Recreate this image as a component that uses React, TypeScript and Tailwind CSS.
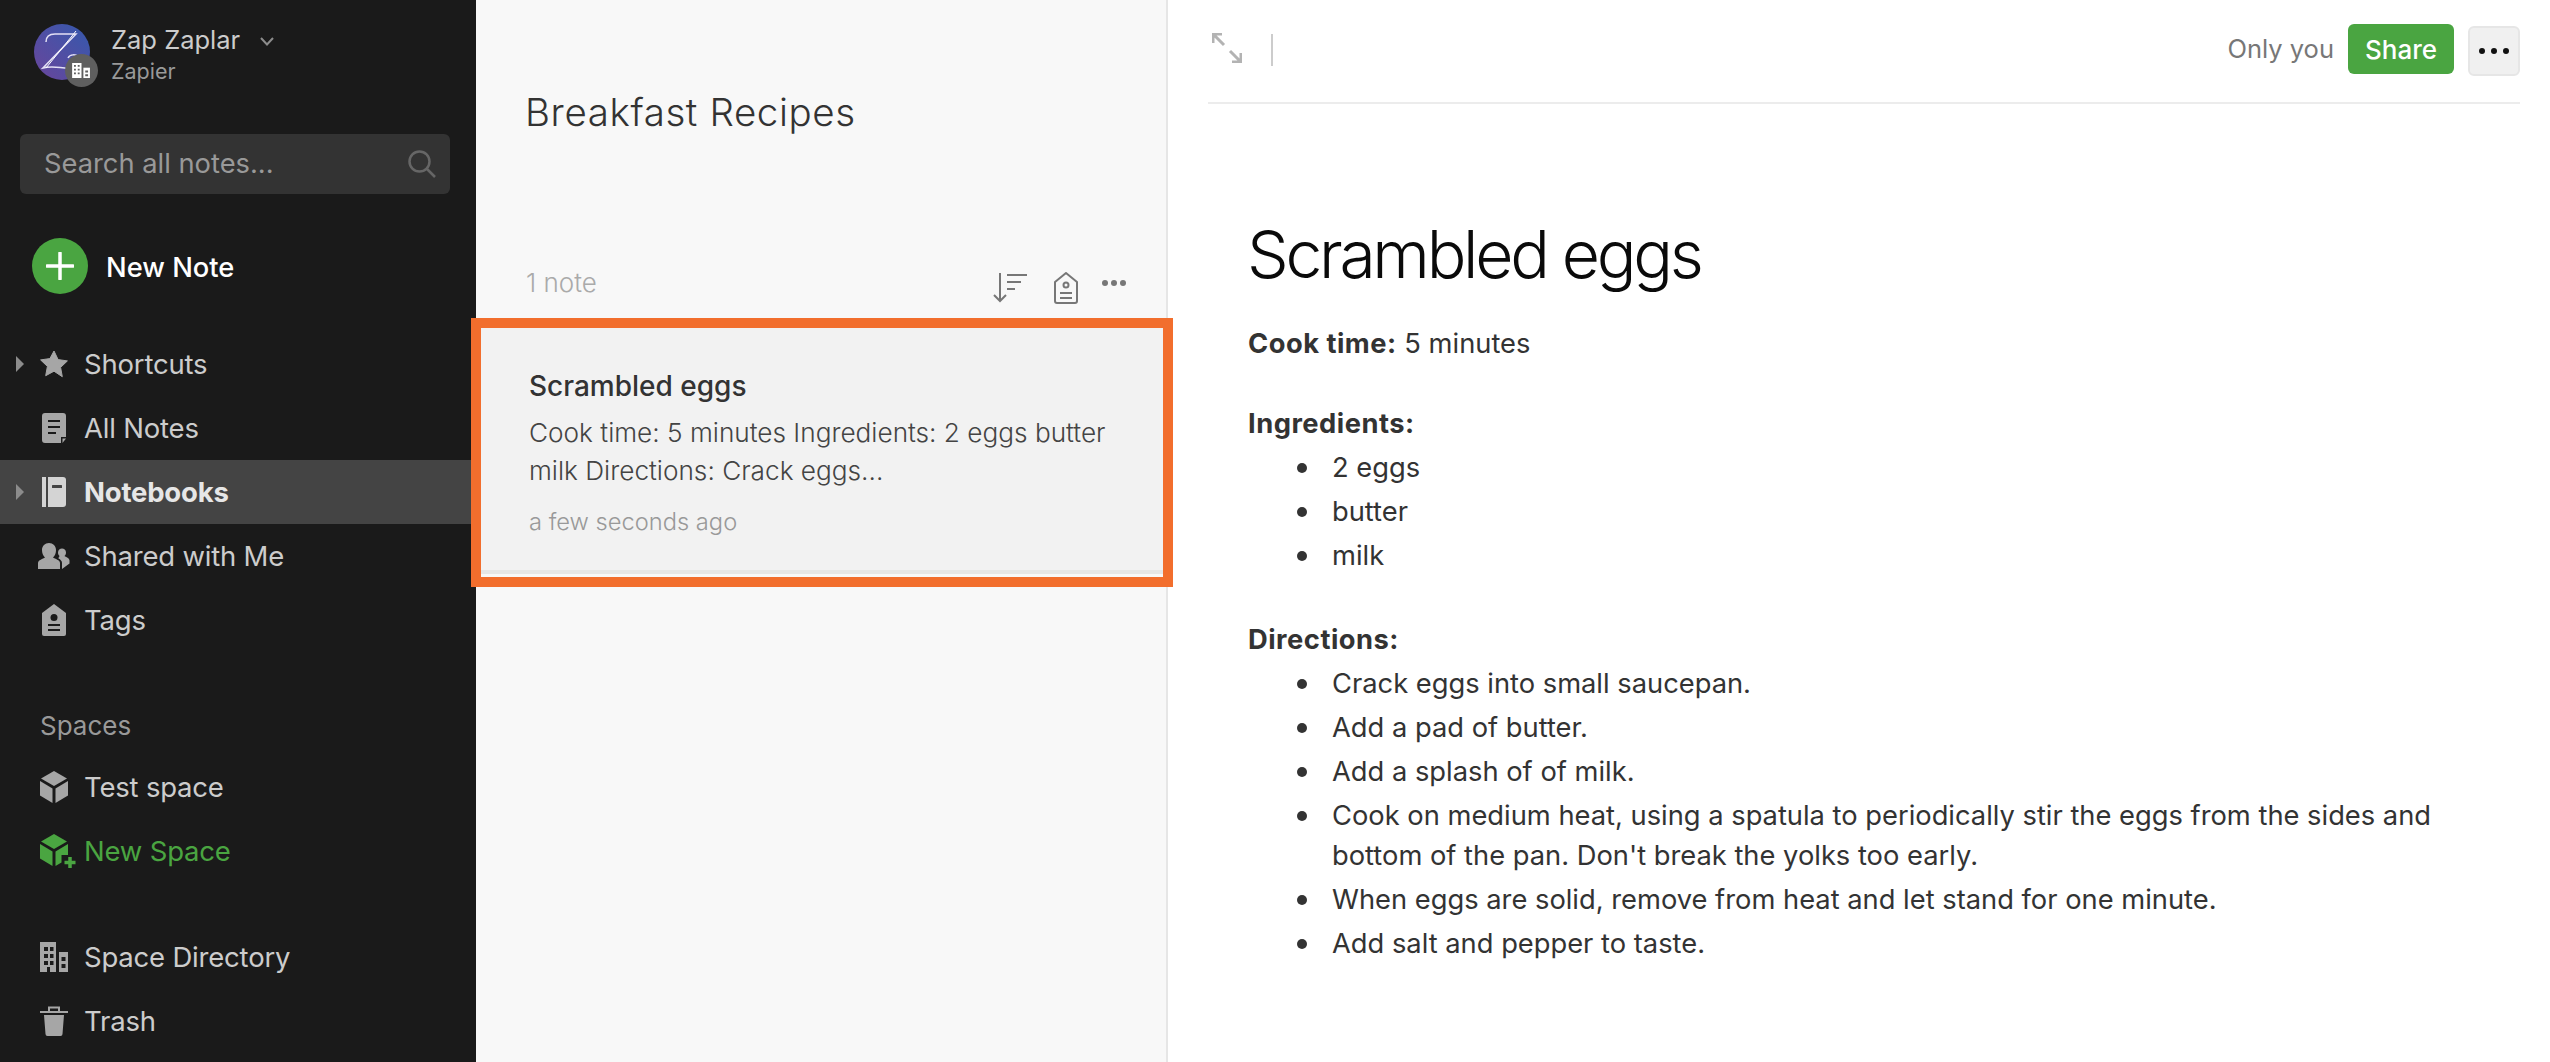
import React from 'react';

const font = { sans: "font-['Inter',sans-serif]" };

function StarIcon() {
  return (
    <svg viewBox="0 0 28 28" className="w-7 h-7 fill-[#a6a6a6]">
      <path d="M14 1l4.100 8.600 9.300 1.300-6.800 6.500 1.700 9.300L14 21.200 5.700 25.700l1.700-9.300L.6 9.900l9.300-1.300z" stroke="#a6a6a6" strokeLinejoin="round" />
    </svg>
  );
}

function NoteIcon() {
  return (
    <svg viewBox="0 0 24 30" className="w-6 h-[30px]">
      <path d="M3 0h18a3 3 0 013 3v21h-5v6H3a3 3 0 01-3-3V3a3 3 0 013-3z" fill="#a6a6a6" />
      <path d="M20.500 25.500H24l-3.500 4.500z" fill="#a6a6a6" />
      <path d="M6 8h12M6 14h12M6 20h8" stroke="#1a1a1a" strokeWidth="2" />
    </svg>
  );
}

function NotebookIcon() {
  return (
    <svg viewBox="0 0 24 30" className="w-6 h-[30px]">
      <rect x="0" y="0" width="4" height="30" fill="#d4d4d4" />
      <path d="M6 0h15a3 3 0 013 3v24a3 3 0 01-3 3H6z" fill="#d4d4d4" />
      <rect x="10" y="8" width="10" height="3" rx="0.500" fill="#444" />
    </svg>
  );
}

function SharedIcon() {
  return (
    <svg viewBox="0 0 32 26" className="w-8 h-[26px]">
      <path d="M0 26v-6c0-3 5-4 7-5.500-2-2-3-4.500-3-7.500C4 3 7 0 11 0s7 3 7 7c0 3-1 5.500-3 7.500 2 1.500 7 2.500 7 5.500v6z" fill="#a6a6a6" />
      <path d="M24 26v-6c0-2-1.500-3.500-3.500-4.500 0-1 .5-1.500 1-2.500-1-1-1.500-2-1.500-3.500 0-2.500 2-4 4-4s4 1.500 4 4c0 1.500-.5 2.500-1.500 3.500 1.500 1 5 2 5 4.500v3z" fill="#a6a6a6" />
    </svg>
  );
}

function TagIcon() {
  return (
    <svg viewBox="0 0 24 32" className="w-6 h-8">
      <path d="M12 0l12 9v21a2 2 0 01-2 2H2a2 2 0 01-2-2V9z" fill="#a6a6a6" />
      <circle cx="12" cy="13.500" r="3.500" fill="#1a1a1a" />
      <path d="M6 21h12M6 26h12" stroke="#1a1a1a" strokeWidth="2" />
    </svg>
  );
}

function CubeIcon({ color }: { color: string }) {
  return (
    <svg viewBox="0 0 28 32" className="w-7 h-8">
      <path d="M14 0l13 7.500L14 15 1 7.500z" fill={color} />
      <path d="M0 10l12.500 7.500V32L0 24.500z" fill={color} />
      <path d="M28 10l-12.500 7.500V32L28 24.500z" fill={color} />
    </svg>
  );
}

function NewSpaceIcon() {
  return (
    <svg viewBox="0 0 36 34" className="w-9 h-[34px] overflow-visible translate-x-[4px]">
      <path d="M14 0l13 7.500L14 15 1 7.500z" fill="#4aa541" />
      <path d="M0 10l12.500 7.500V32L0 24.500z" fill="#4aa541" />
      <path d="M28 10l-12.500 7.500V32l6-3.500V21H28z" fill="#4aa541" />
      <path d="M30 23v11M24.500 28.500h11" stroke="#4aa541" strokeWidth="3.500" />
    </svg>
  );
}

function DirectoryIcon() {
  return (
    <svg viewBox="0 0 28 30" className="w-7 h-[30px]">
      <path d="M0 0h16v30H0z" fill="#a6a6a6" />
      <path d="M19 10h9v20h-9z" fill="#a6a6a6" />
      <path d="M4 5h4v4H4zM10 5h3.500v4H10zM4 12h4v4H4zM10 12h3.500v4H10zM4 19h4v4H4zM10 19h3.500v4H10zM7 25h3v5H7zM21.500 15h4v4h-4zM21.500 22h4v4h-4z" fill="#1a1a1a" />
    </svg>
  );
}

function TrashIcon() {
  return (
    <svg viewBox="0 0 28 30" className="w-7 h-[30px]">
      <path d="M9 5V1.500h10V5" fill="none" stroke="#a6a6a6" strokeWidth="2" />
      <path d="M0 5h28v2H0z" fill="#a6a6a6" />
      <path d="M4 9h20l-1.500 19a2 2 0 01-2 2h-13a2 2 0 01-2-2z" fill="#a6a6a6" />
    </svg>
  );
}

function Caret() {
  return (
    <svg viewBox="0 0 8 16" className="w-2 h-4 fill-[#8c8c8c]">
      <path d="M0 0l8 8-8 8z" />
    </svg>
  );
}

function NavRow({ icon, label, caret, active, green }: { icon: React.ReactNode; label: string; caret?: boolean; active?: boolean; green?: boolean }) {
  return (
    <div className={`flex items-center h-16 pl-4 ${active ? 'bg-[#444444]' : ''}`}>
      <div className="w-2 flex justify-center">{caret && <Caret />}</div>
      <div className="w-9 ml-[12px] flex justify-center shrink-0">{icon}</div>
      <span className={`ml-[12px] mt-[1px] text-[27.5px] tracking-[-0.2px] ${active ? 'font-bold text-[#e6e6e6]' : green ? 'text-[#4aa541]' : 'text-[#cccccc]'}`}>
        {label}
      </span>
    </div>
  );
}

function Sidebar() {
  return (
    <aside className="w-[476px] shrink-0 bg-[#1a1a1a] flex flex-col h-full">
      <div className="flex pl-[34px] pt-6 h-[134px]">
        <div className="relative w-14 h-14 shrink-0">
          <svg viewBox="0 0 56 56" className="w-14 h-14">
            <defs>
              <linearGradient id="avatar" x1="0" y1="1" x2="1" y2="0">
                <stop offset="0" stopColor="#6a459b" />
                <stop offset="1" stopColor="#3459ad" />
              </linearGradient>
            </defs>
            <circle cx="28" cy="28" r="28" fill="url(#avatar)" />
            <path d="M12 18c0-6 3-8 9-8h21L9 44c8-2 16-1 27 1" fill="none" stroke="#e3e0f5" strokeWidth="1.500" />
            <path d="M42 7L12 44" fill="none" stroke="#fff" strokeWidth="1" />
            <path d="M34 34c2-4 8-4 10-1" fill="none" stroke="#e3e0f5" strokeWidth="1.500" />
          </svg>
          <div className="absolute left-[31px] top-[30px] w-[33px] h-[33px] rounded-full bg-[#5f5f5f] flex items-center justify-center">
            <svg viewBox="0 0 20 16" className="w-[19px] h-[15px]">
              <path d="M0 0h10v16H0z" fill="#fff" />
              <path d="M12 5h7v11h-7z" fill="#fff" />
              <path d="M2 2h2v2H2zM6 2h2v2H6zM2 6h2v2H2zM6 6h2v2H6zM2 10h2v2H2zM6 10h2v2H6zM14 8h3v2h-3zM14 12h3v2h-3z" fill="#5f5f5f" />
            </svg>
          </div>
        </div>
        <div className="ml-[21px] flex flex-col">
          <div className="flex items-center h-[30px] mt-[1px]">
            <span className="text-[25.5px] text-[#cccccc]">Zap Zaplar</span>
            <svg viewBox="0 0 14 9" className="ml-5 mt-[3px] w-[14px] h-[9px]" fill="none" stroke="#8c8c8c" strokeWidth="2">
              <path d="M1 1l6 6.500L13 1" />
            </svg>
          </div>
          <span className="text-[21.5px] leading-[26px] mt-[3px] text-[#999]">Zapier</span>
        </div>
      </div>
      <div className="ml-5 mr-[26px] h-[60px] rounded-md bg-[#333333] flex items-center pl-[24px] pr-[14px] justify-between">
        <span className="text-[27.3px] text-[#999999]">Search all notes...</span>
        <svg viewBox="0 0 28 28" className="w-7 h-7" fill="none" stroke="#666" strokeWidth="2.500">
          <circle cx="11.500" cy="11.500" r="10" />
          <path d="M19 19l8 8" />
        </svg>
      </div>
      <div className="flex items-center pl-8 mt-11 h-14">
        <div className="w-14 h-14 rounded-full bg-[#4aa541] flex items-center justify-center">
          <svg viewBox="0 0 28 28" className="w-7 h-7">
            <path d="M14 1v26M1 14h26" stroke="#fff" strokeWidth="3.500" strokeLinecap="round" />
          </svg>
        </div>
        <span className="ml-[18px] mt-1 text-[27.3px] font-medium text-white">New Note</span>
      </div>
      <nav className="mt-[38px] mr-[5px]">
        <NavRow icon={<StarIcon />} label="Shortcuts" caret />
        <NavRow icon={<NoteIcon />} label="All Notes" />
        <NavRow icon={<NotebookIcon />} label="Notebooks" caret active />
        <NavRow icon={<SharedIcon />} label="Shared with Me" />
        <NavRow icon={<TagIcon />} label="Tags" />
      </nav>
      <div className="mt-[57px] pl-10 h-[32px] flex items-center text-[26px] text-[#999]">Spaces</div>
      <nav className="mt-[14px]">
        <NavRow icon={<CubeIcon color="#a6a6a6" />} label="Test space" />
        <NavRow icon={<NewSpaceIcon />} label="New Space" green />
      </nav>
      <nav className="mt-[42px]">
        <NavRow icon={<DirectoryIcon />} label="Space Directory" />
        <NavRow icon={<TrashIcon />} label="Trash" />
      </nav>
    </aside>
  );
}

function NoteList() {
  return (
    <section className="w-[692px] shrink-0 bg-[#f8f8f8] border-r-2 border-[#e6e6e6] h-full flex flex-col">
      <h1 className="pl-[49px] mt-[88px] text-[38.5px] leading-[48px] font-light text-[#333] tracking-[0.6px]">Breakfast Recipes</h1>
      <div className="flex justify-between pl-[50px] pr-[40px] mt-[131px] h-8">
        <span className="text-[26px] leading-8 font-light text-[#aaaaaa]">1 note</span>
        <div className="flex items-start">
          <svg viewBox="0 0 34 30" className="mt-[6px] w-[34px] h-[30px]" fill="none" stroke="#777" strokeWidth="2">
            <path d="M7 0v28M1 22l6 6 6-6" />
            <path d="M14 2h20M14 9h14M14 16h8" />
          </svg>
          <svg viewBox="0 0 24 32" className="mt-[5px] w-6 h-8 ml-[27px]" fill="none" stroke="#777" strokeWidth="2">
            <path d="M12 1l11 9v19a2 2 0 01-2 2H3a2 2 0 01-2-2V10z" strokeLinejoin="round" />
            <circle cx="12" cy="13" r="2.500" />
            <path d="M6 21h12M6 26h12" />
          </svg>
          <svg viewBox="0 0 24 6" className="mt-[13px] w-6 h-[6px] ml-6 fill-[#777]">
            <circle cx="3" cy="3" r="3" />
            <circle cx="12" cy="3" r="3" />
            <circle cx="21" cy="3" r="3" />
          </svg>
        </div>
      </div>
      <div className="mt-[29px] h-[246px] bg-[#f2f2f2] border-b-4 border-[#e6e6e6] pl-[53px] pr-[40px] pt-[40px]">
        <div className="text-[28px] leading-[36px] font-medium text-[#333]">Scrambled eggs</div>
        <p className="mt-[10px] text-[26.2px] leading-[38px] font-light text-[#444]">
          Cook time: 5 minutes Ingredients: 2 eggs butter milk Directions: Crack eggs...
        </p>
        <div className="mt-[18px] text-[23.7px] leading-[28px] font-light text-[#999]">a few seconds ago</div>
      </div>
    </section>
  );
}

const itemClass = "relative leading-[40px] pb-1 before:absolute before:left-[-35px] before:top-[15px] before:w-[10px] before:h-[10px] before:rounded-full before:bg-[#333]";

function Editor() {
  return (
    <main className="flex-1 bg-white pl-10 pr-[30px] h-full">
      <div className="h-[104px] border-b-2 border-[#ececec] flex justify-between pl-[4px]">
        <div className="flex items-start pt-[33px]">
          <svg viewBox="0 0 30 30" className="w-[30px] h-[30px]" fill="none" stroke="#b3b3b3" strokeWidth="3">
            <path d="M1 10V1h9M1 1l11 11M29 20v9h-9M29 29L18 18" />
          </svg>
          <div className="ml-[29px] mt-[1px] w-[2px] h-8 bg-[#cccccc]" />
        </div>
        <div className="flex items-start pt-6">
          <span className="h-[50px] flex items-center text-[25.5px] text-[#777]">Only you</span>
          <button className="ml-[14px] w-[106px] h-[50px] rounded-md bg-[#4aa541] text-[26px] font-medium text-white">Share</button>
          <button className="ml-[14px] mt-[2px] w-[52px] h-[50px] rounded-md bg-[#f0f0f0] border-2 border-[#e6e6e6] flex items-center justify-center">
            <svg viewBox="0 0 30 6" className="w-[30px] h-[6px] fill-[#111]">
              <circle cx="3" cy="3" r="3" />
              <circle cx="15" cy="3" r="3" />
              <circle cx="27" cy="3" r="3" />
            </svg>
          </button>
        </div>
      </div>
      <article className="pl-[40px] text-[27.3px] leading-[44px] text-[#333]">
        <h2 className="-ml-[1px] mt-[105px] text-[66px] leading-[90px] font-light text-[#0a0a0a] tracking-[-3.3px]">Scrambled eggs</h2>
        <p className="mt-[23px]"><b className="font-bold tracking-[0.5px]">Cook time:</b> 5 minutes</p>
        <p className="mt-[36px]"><b className="font-bold tracking-[0.5px]">Ingredients:</b></p>
        <ul className="pl-[84px] pt-[2px]">
          <li className={itemClass}>2 eggs</li>
          <li className={itemClass}>butter</li>
          <li className={itemClass}>milk</li>
        </ul>
        <p className="mt-[38px]"><b className="font-bold tracking-[0.5px]">Directions:</b></p>
        <ul className="pl-[84px] pt-[2px]">
          <li className={itemClass}>Crack eggs into small saucepan.</li>
          <li className={itemClass}>Add a pad of butter.</li>
          <li className={itemClass}>Add a splash of of milk.</li>
          <li className={itemClass}>Cook on medium heat, using a spatula to periodically stir the eggs from the sides and bottom of the pan. Don't break the yolks too early.</li>
          <li className={itemClass}>When eggs are solid, remove from heat and let stand for one minute.</li>
          <li className={itemClass}>Add salt and pepper to taste.</li>
        </ul>
      </article>
    </main>
  );
}

export default function App() {
  return (
    <div className={`relative flex w-[2550px] h-[1062px] overflow-hidden ${font.sans}`}>
      <Sidebar />
      <NoteList />
      <Editor />
      <div className="absolute left-[471px] top-[318px] w-[702px] h-[269px] border-[10px] border-[#f26e2d]" />
    </div>
  );
}
